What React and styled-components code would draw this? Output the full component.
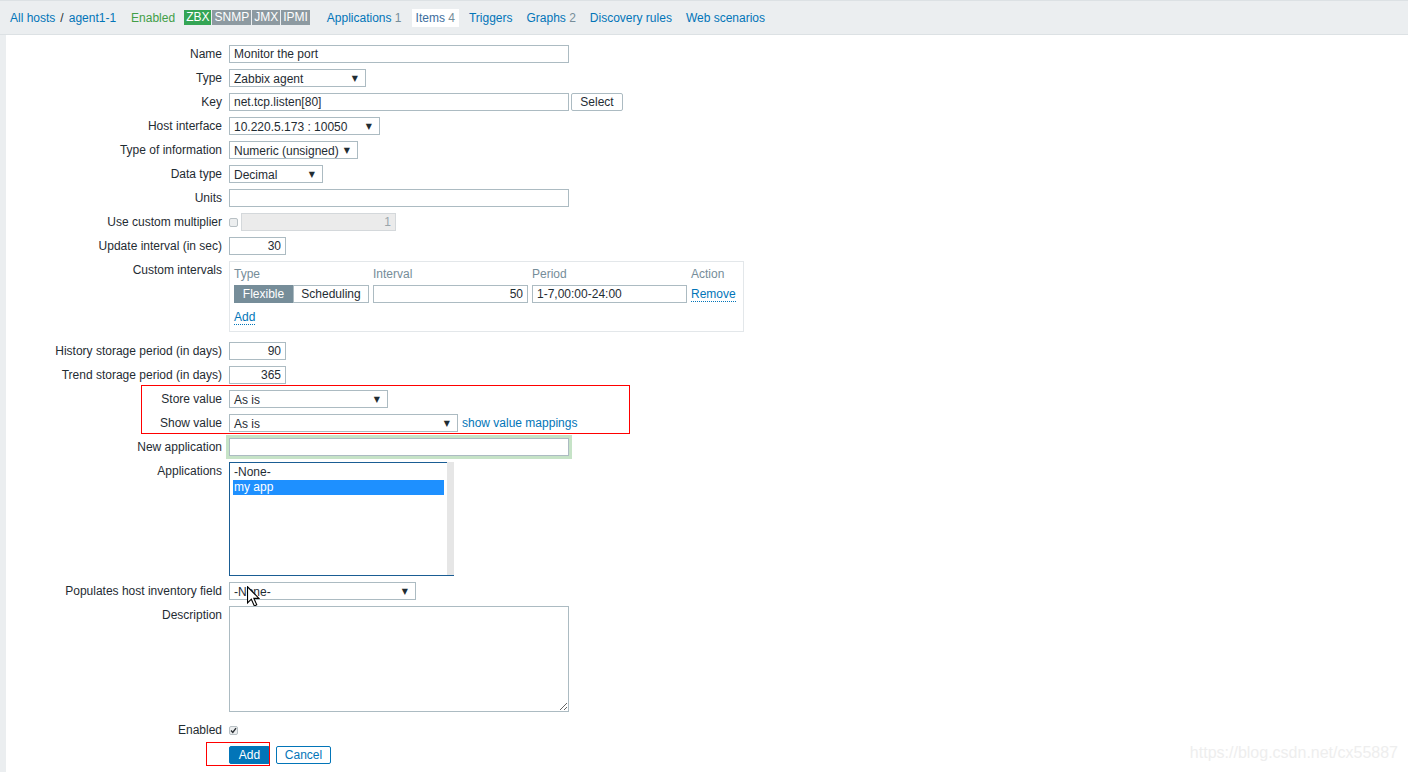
import React from 'react';
import styled, { createGlobalStyle } from 'styled-components';

const GlobalStyle = createGlobalStyle`
  html, body { margin: 0; padding: 0; }
  body {
    background: #ebeef0;
    font-family: "Liberation Sans", Arial, sans-serif;
    font-size: 12px;
    color: #1f2c33;
  }
  * { box-sizing: border-box; }
`;

const Page = styled.div`
  position: relative;
  min-height: 772px;
  display: flex;
  flex-direction: column;
`;

const TopBar = styled.nav`
  height: 35px;
  border-top: 1px solid #dce1e4;
  border-bottom: 1px solid #dce1e4;
  display: flex;
  align-items: center;
  padding-left: 10px;
  white-space: nowrap;
`;

const NavLink = styled.a`
  color: #0275b8;
  text-decoration: none;
  cursor: pointer;
`;

const Sep = styled.span`
  margin: 0 5px 0 5px;
  color: #1f2c33;
`;

const Status = styled.span`
  margin-left: 15px;
  color: #429e47;
`;

const Badges = styled.div`
  display: flex;
  gap: 1px;
  margin-left: 9px;
`;

const Badge = styled.span`
  height: 15px;
  line-height: 15px;
  padding: 0 2px;
  color: #fff;
  background: ${(p) => (p.$on ? '#34a555' : '#8d9aa1')};
`;

const Tabs = styled.ul`
  display: flex;
  gap: 6px;
  list-style: none;
  margin: 0 0 0 13px;
  padding: 0;
`;

const Tab = styled.li`
  height: 18px;
  line-height: 18px;
  padding: 0 4px;
  background: ${(p) => (p.$active ? '#fff' : 'transparent')};
  color: ${(p) => (p.$active ? '#3d6e9e' : '#0275b8')};
`;

const Count = styled.span`
  color: #768d99;
`;

const Panel = styled.main`
  flex: 1;
  margin-left: 6px;
  background: #fff;
  padding-top: 10px;
`;

const Row = styled.div`
  display: flex;
  align-items: flex-start;
  gap: 7px;
  margin-bottom: ${(p) => (p.$mb !== undefined ? p.$mb : 6)}px;
`;

const Label = styled.label`
  width: 216px;
  flex-shrink: 0;
  text-align: right;
  line-height: 18px;
  white-space: nowrap;
`;

const Field = styled.div`
  display: flex;
  align-items: center;
  gap: ${(p) => (p.$gap !== undefined ? p.$gap : 3)}px;
  min-height: 18px;
  position: relative;
`;

const TextInput = styled.input`
  width: ${(p) => p.$w}px;
  height: 18px;
  border: 1px solid ${(p) => (p.disabled ? '#d4d8db' : '#acbbc2')};
  padding: 0 4px;
  font: inherit;
  color: ${(p) => (p.disabled ? '#9aa5ab' : '#1f2c33')};
  background: ${(p) => (p.disabled ? '#ebebeb' : '#fff')};
  text-align: ${(p) => (p.$right ? 'right' : 'left')};
  outline: none;
  box-shadow: ${(p) => (p.$glow ? '0 0 0 3px #c6e3c7' : 'none')};
`;

const Select = styled.div`
  width: ${(p) => p.$w}px;
  height: 18px;
  border: 1px solid #acbbc2;
  background: #fff;
  display: flex;
  align-items: center;
  justify-content: space-between;
  padding: 1px 7px 0 4px;
  position: relative;
  white-space: nowrap;
`;

const Arrow = styled.span`
  font-family: "DejaVu Sans", sans-serif;
  font-size: 8px;
  color: #1f2c33;
`;

const PlainButton = styled.button`
  width: ${(p) => p.$w}px;
  height: 18px;
  padding: 0;
  font: inherit;
  border: 1px solid ${(p) => (p.$variant === 'neutral' ? '#acbbc2' : '#0275b8')};
  border-radius: 2px;
  background: ${(p) => (p.$variant === 'primary' ? '#0275b8' : '#fff')};
  color: ${(p) =>
    p.$variant === 'primary' ? '#fff' : p.$variant === 'neutral' ? '#1f2c33' : '#0275b8'};
  cursor: pointer;
`;

const CheckBox = styled.span`
  width: 9px;
  height: 9px;
  border: 1px solid #b8c0c4;
  border-radius: 2px;
  background: #eceeef;
  display: inline-flex;
  align-items: center;
  justify-content: center;
`;

const IntervalsBox = styled.div`
  width: 515px;
  height: 71px;
  border: 1px solid #e3e7ea;
  padding: 5px 4px 4px;
  display: grid;
  grid-template-columns: 135px 155px 155px auto;
  column-gap: 4px;
  row-gap: 4px;
  align-content: start;
`;

const ColHead = styled.div`
  color: #768d99;
  line-height: 14px;
`;

const Segmented = styled.div`
  display: flex;
`;

const Segment = styled.span`
  width: ${(p) => p.$w}px;
  height: 18px;
  line-height: 16px;
  text-align: center;
  border: 1px solid ${(p) => (p.$active ? '#768d99' : '#acbbc2')};
  background: ${(p) => (p.$active ? '#768d99' : '#fff')};
  color: ${(p) => (p.$active ? '#fff' : '#1f2c33')};
`;

const DottedLink = styled.a`
  color: #0275b8;
  text-decoration: none;
  border-bottom: 1px dotted #0275b8;
  line-height: 13px;
  align-self: center;
  justify-self: start;
  margin-top: ${(p) => (p.$mt ? p.$mt : 0)}px;
  cursor: pointer;
`;

const Link = styled.a`
  color: #0275b8;
  text-decoration: none;
  cursor: pointer;
`;

const Annotated = styled.div`
  position: relative;
  display: ${(p) => (p.$inline ? 'flex' : 'block')};
`;

const RedFrame = styled.span`
  position: absolute;
  left: ${(p) => p.$l}px;
  top: ${(p) => p.$t}px;
  width: ${(p) => p.$w}px;
  height: ${(p) => p.$h}px;
  border: 1px solid #ff0000;
  pointer-events: none;
`;

const ListBox = styled.div`
  width: 225px;
  height: 114px;
  display: flex;
  background: #fff;
  border-bottom: 1px solid #1a5d94;
`;

const ListOptions = styled.div`
  flex: 1;
  border: 1px solid #1a5d94;
  border-right: none;
  border-bottom: none;
  padding: 2px 3px 0 3px;
`;

const Option = styled.div`
  line-height: 15px;
  padding: 0 1px;
  background: ${(p) => (p.$selected ? '#1e90ff' : 'transparent')};
  color: ${(p) => (p.$selected ? '#fff' : '#1f2c33')};
`;

const ScrollTrack = styled.div`
  width: 7px;
  background: #e6e6e6;
`;

const TextArea = styled.textarea`
  width: 340px;
  height: 106px;
  border: 1px solid #acbbc2;
  font: inherit;
  padding: 2px 4px;
  resize: both;
  outline: none;
`;

const Cursor = styled.svg`
  position: absolute;
  left: 18px;
  top: 4px;
  pointer-events: none;
`;

const Watermark = styled.div`
  position: absolute;
  right: 10px;
  top: 744px;
  font-size: 16px;
  line-height: 18px;
  color: #eeeeee;
  pointer-events: none;
`;

function Sel({ w, children }) {
  return (
    <Select $w={w}>
      <span>{children}</span>
      <Arrow>▼</Arrow>
    </Select>
  );
}

function FormRow({ label, children, mb, gap }) {
  return (
    <Row $mb={mb}>
      <Label>{label}</Label>
      <Field $gap={gap}>{children}</Field>
    </Row>
  );
}

export default function App() {
  return (
    <>
      <GlobalStyle />
      <Page>
        <TopBar>
          <NavLink>All hosts</NavLink>
          <Sep>/</Sep>
          <NavLink>agent1-1</NavLink>
          <Status>Enabled</Status>
          <Badges>
            <Badge $on>ZBX</Badge>
            <Badge>SNMP</Badge>
            <Badge>JMX</Badge>
            <Badge>IPMI</Badge>
          </Badges>
          <Tabs>
            <Tab>Applications <Count>1</Count></Tab>
            <Tab $active>Items <Count>4</Count></Tab>
            <Tab>Triggers</Tab>
            <Tab>Graphs <Count>2</Count></Tab>
            <Tab>Discovery rules</Tab>
            <Tab>Web scenarios</Tab>
          </Tabs>
        </TopBar>
        <Panel>
          <FormRow label="Name">
            <TextInput $w={340} defaultValue="Monitor the port" />
          </FormRow>
          <FormRow label="Type">
            <Sel w={137}>Zabbix agent</Sel>
          </FormRow>
          <FormRow label="Key" gap={2}>
            <TextInput $w={340} defaultValue="net.tcp.listen[80]" />
            <PlainButton $w={52} $variant="neutral">Select</PlainButton>
          </FormRow>
          <FormRow label="Host interface">
            <Sel w={151}>10.220.5.173 : 10050</Sel>
          </FormRow>
          <FormRow label="Type of information">
            <Sel w={129}>Numeric (unsigned)</Sel>
          </FormRow>
          <FormRow label="Data type">
            <Sel w={94}>Decimal</Sel>
          </FormRow>
          <FormRow label="Units">
            <TextInput $w={340} defaultValue="" />
          </FormRow>
          <FormRow label="Use custom multiplier" gap={3}>
            <CheckBox />
            <TextInput $w={155} $right disabled defaultValue="1" />
          </FormRow>
          <FormRow label="Update interval (in sec)">
            <TextInput $w={57} $right defaultValue="30" />
          </FormRow>
          <FormRow label="Custom intervals" mb={10}>
            <IntervalsBox>
              <ColHead>Type</ColHead>
              <ColHead>Interval</ColHead>
              <ColHead>Period</ColHead>
              <ColHead>Action</ColHead>
              <Segmented>
                <Segment $w={59} $active>Flexible</Segment>
                <Segment $w={76}>Scheduling</Segment>
              </Segmented>
              <TextInput $w={155} $right defaultValue="50" />
              <TextInput $w={155} defaultValue="1-7,00:00-24:00" />
              <DottedLink $mt={1}>Remove</DottedLink>
              <DottedLink $mt={4}>Add</DottedLink>
            </IntervalsBox>
          </FormRow>
          <FormRow label="History storage period (in days)">
            <TextInput $w={57} $right defaultValue="90" />
          </FormRow>
          <FormRow label="Trend storage period (in days)">
            <TextInput $w={57} $right defaultValue="365" />
          </FormRow>
          <Annotated>
            <FormRow label="Store value">
              <Sel w={159}>As is</Sel>
            </FormRow>
            <FormRow label="Show value" gap={4}>
              <Sel w={229}>As is</Sel>
              <Link>show value mappings</Link>
            </FormRow>
            <RedFrame $l={135} $t={-5} $w={489} $h={49} />
          </Annotated>
          <FormRow label="New application">
            <TextInput $w={340} $glow defaultValue="" />
          </FormRow>
          <FormRow label="Applications">
            <ListBox>
              <ListOptions>
                <Option>-None-</Option>
                <Option $selected>my app</Option>
              </ListOptions>
              <ScrollTrack />
            </ListBox>
          </FormRow>
          <FormRow label="Populates host inventory field">
            <Sel w={187}>-None-</Sel>
            <Cursor width="13" height="21" viewBox="0 0 12 19">
              <path
                d="M0.5 0.5 L0.5 15.5 L4 12 L6.8 18.2 L9 17.2 L6.3 11.2 L11 11.2 Z"
                fill="#fff"
                stroke="#000"
                strokeWidth="1"
                strokeLinejoin="miter"
              />
            </Cursor>
          </FormRow>
          <FormRow label="Description" mb={9}>
            <TextArea defaultValue="" />
          </FormRow>
          <FormRow label="Enabled" mb={7}>
            <CheckBox>
              <svg width="7" height="7" viewBox="0 0 7 7">
                <path d="M1 3.6 L2.8 5.4 L6 1.2" fill="none" stroke="#2a2f33" strokeWidth="1.4" />
              </svg>
            </CheckBox>
          </FormRow>
          <Row>
            <Label />
            <Field $gap={6}>
              <Annotated $inline>
                <PlainButton $w={41} $variant="primary">Add</PlainButton>
                <RedFrame $l={-23} $t={-4} $w={64} $h={24} />
              </Annotated>
              <PlainButton $w={55} $variant="outline">Cancel</PlainButton>
            </Field>
          </Row>
        </Panel>
        <Watermark>https://blog.csdn.net/cx55887</Watermark>
      </Page>
    </>
  );
}
